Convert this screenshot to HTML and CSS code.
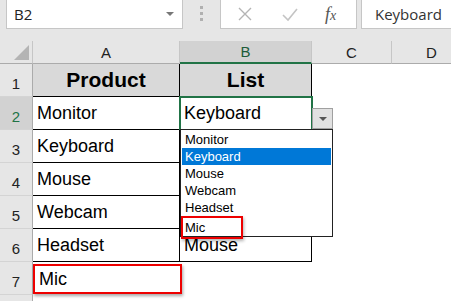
FILE: index.html
```html
<!DOCTYPE html>
<html lang="en">
<head>
    <meta charset="UTF-8">
    <title>Data Validation List</title>
    <link rel="stylesheet" href="styles.css">
</head>
<body>
    <div class="toolbar">
        <div class="name-box">
            <span>B2</span>
            <span class="name-arrow"></span>
        </div>
        <div class="grip"><i></i><i></i><i></i></div>
        <div class="tools">
            <svg width="16" height="16" viewBox="0 0 16 16"><path d="M2 2 L14 14 M14 2 L2 14" stroke="#b4b4b4" stroke-width="1.4" fill="none"/></svg>
            <svg width="18" height="16" viewBox="0 0 18 16"><path d="M2 9 L7 14 L16 3" stroke="#c4c4c4" stroke-width="1.6" fill="none"/></svg>
            <span class="fx"><i>f</i><i class="x">x</i></span>
        </div>
        <div class="formula">Keyboard</div>
    </div>

    <div class="sheet">
        <div class="corner"><span class="tri"></span></div>
        <div class="col-head">A</div>
        <div class="col-head active">B</div>
        <div class="col-head">C</div>
        <div class="col-head">D</div>

        <div class="row-head">1</div>
        <div class="cell title left">Product</div>
        <div class="cell title">List</div>
        <div class="cell blank"></div>
        <div class="cell blank"></div>

        <div class="row-head active">2</div>
        <div class="cell left">Monitor</div>
        <div class="cell selected">Keyboard</div>
        <div class="cell blank"></div>
        <div class="cell blank"></div>

        <div class="row-head">3</div>
        <div class="cell left">Keyboard</div>
        <div class="cell"></div>
        <div class="cell blank"></div>
        <div class="cell blank"></div>

        <div class="row-head">4</div>
        <div class="cell left">Mouse</div>
        <div class="cell"></div>
        <div class="cell blank"></div>
        <div class="cell blank"></div>

        <div class="row-head">5</div>
        <div class="cell left">Webcam</div>
        <div class="cell"></div>
        <div class="cell blank"></div>
        <div class="cell blank"></div>

        <div class="row-head">6</div>
        <div class="cell left">Headset</div>
        <div class="cell">Mouse</div>
        <div class="cell blank"></div>
        <div class="cell blank"></div>

        <div class="row-head">7</div>
        <div class="cell blank marked">Mic</div>
        <div class="cell blank"></div>
        <div class="cell blank"></div>
        <div class="cell blank"></div>

        <div class="row-head"></div>
        <div class="cell blank"></div>
        <div class="cell blank"></div>
        <div class="cell blank"></div>
        <div class="cell blank"></div>

        <div class="drop-btn"><span></span></div>
        <ul class="drop-list">
            <li>Monitor</li>
            <li class="hl">Keyboard</li>
            <li>Mouse</li>
            <li>Webcam</li>
            <li>Headset</li>
            <li class="marked-item">Mic</li>
        </ul>
    </div>
</body>
</html>
```
FILE: styles.css
```css
body {
    margin: 0;
    background-color: #e6e6e6;
    font-family: 'Liberation Sans', Arial, sans-serif;
    overflow: hidden;
}

/* formula bar */
.toolbar {
    display: flex;
    align-items: flex-start;
    height: 41px;
}
.name-box {
    box-sizing: border-box;
    margin: -1px 0 0 6px;
    width: 177px;
    height: 30px;
    background-color: #fff;
    border: 1px solid #c6c6c6;
    display: flex;
    align-items: center;
    justify-content: space-between;
    padding: 0 8px 0 7px;
    font-family: 'Open Sans', sans-serif;
    font-size: 15px;
    color: #222;
}
.name-arrow {
    width: 0;
    height: 0;
    border-left: 4px solid transparent;
    border-right: 4px solid transparent;
    border-top: 4px solid #777;
}
.grip {
    width: 37px;
    display: flex;
    flex-direction: column;
    align-items: center;
    gap: 3px;
    padding-top: 6px;
}
.grip i {
    width: 3px;
    height: 3px;
    background-color: #b0b0b0;
}
.tools {
    box-sizing: border-box;
    margin-top: -1px;
    width: 137px;
    height: 30px;
    background-color: #fff;
    border: 1px solid #c6c6c6;
    display: flex;
    align-items: center;
    padding-left: 16px;
    gap: 28px;
}
.fx {
    font-family: 'Liberation Serif', serif;
    font-size: 18px;
    color: #555;
    margin-left: -2px;
}
.fx .x {
    font-size: 14px;
}
.formula {
    box-sizing: border-box;
    margin: -1px 0 0 4px;
    flex: 1;
    height: 30px;
    background-color: #fff;
    border: 1px solid #c6c6c6;
    border-right: none;
    padding: 4px 0 0 13px;
    font-family: 'Open Sans', sans-serif;
    font-size: 15px;
    color: #333;
}

/* sheet grid */
.sheet {
    position: relative;
    display: grid;
    grid-template-columns: 33px 147px 132px 80px 80px;
    grid-template-rows: 23px repeat(8, 33px);
    background-color: #fff;
}
.corner {
    background-color: #e6e6e6;
    border-right: 1px solid #c6c6c6;
    border-bottom: 1px solid #ababab;
    position: relative;
}
.tri {
    position: absolute;
    right: 3px;
    bottom: 3px;
    width: 0;
    height: 0;
    border-left: 15px solid transparent;
    border-bottom: 15px solid #b4b4b4;
}
.col-head {
    box-sizing: border-box;
    background-color: #e6e6e6;
    border-right: 1px solid #c6c6c6;
    border-bottom: 1px solid #ababab;
    display: flex;
    align-items: center;
    justify-content: center;
    font-size: 15px;
    color: #222;
}
.col-head.active {
    background-color: #d2d2d2;
    border-bottom: 2px solid #217346;
    color: #1d5c3a;
}
.row-head {
    box-sizing: border-box;
    background-color: #e6e6e6;
    border-right: 1px solid #ababab;
    border-bottom: 1px solid #d4d4d4;
    display: flex;
    align-items: flex-end;
    justify-content: center;
    padding-bottom: 4px;
    font-size: 15px;
    color: #222;
}
.row-head.active {
    background-color: #d2d2d2;
    color: #217346;
}
.cell {
    box-sizing: border-box;
    border-right: 1px solid #000;
    border-bottom: 1px solid #000;
    display: flex;
    align-items: center;
    padding-left: 4px;
    font-size: 18px;
    color: #000;
    white-space: nowrap;
}
.cell.blank {
    border: none;
}
.cell.title {
    background-color: #d9d9d9;
    justify-content: center;
    padding-left: 0;
    font-weight: bold;
    font-size: 21px;
}
.cell.selected {
    outline: 2px solid #217346;
    outline-offset: -1px;
}
.cell.marked {
    padding-left: 4px;
    margin: 2px -2px 1px 0;
    border: 2px solid #ee0000;
    box-shadow: 1px 2px 3px rgba(0, 0, 0, 0.35);
}

/* validation dropdown */
.drop-btn {
    position: absolute;
    left: 312px;
    top: 67px;
    box-sizing: border-box;
    width: 21px;
    height: 21px;
    background-color: #e1e1e1;
    border: 1px solid #a0a0a0;
    display: flex;
    align-items: center;
    justify-content: center;
}
.drop-btn span {
    width: 0;
    height: 0;
    border-left: 4px solid transparent;
    border-right: 4px solid transparent;
    border-top: 4px solid #555;
}
.drop-list {
    position: absolute;
    left: 180px;
    top: 88px;
    width: 153px;
    height: 108px;
    box-sizing: border-box;
    margin: 0;
    padding: 1px 0 0 1px;
    list-style: none;
    background-color: #fff;
    border: 1px solid #222;
    font-size: 13px;
    color: #000;
}
.drop-list li {
    height: 17px;
    line-height: 17px;
    padding-left: 3px;
    margin-right: 1px;
}
.drop-list li.hl {
    background-color: #0078d7;
    color: #fff;
}
.drop-list li.marked-item {
    width: 56px;
    margin-left: -1px;
    border: 2px solid #ee0000;
    height: 19px;
    line-height: 19px;
    padding-left: 2px;
    box-shadow: 1px 2px 3px rgba(0, 0, 0, 0.3);
}
```
